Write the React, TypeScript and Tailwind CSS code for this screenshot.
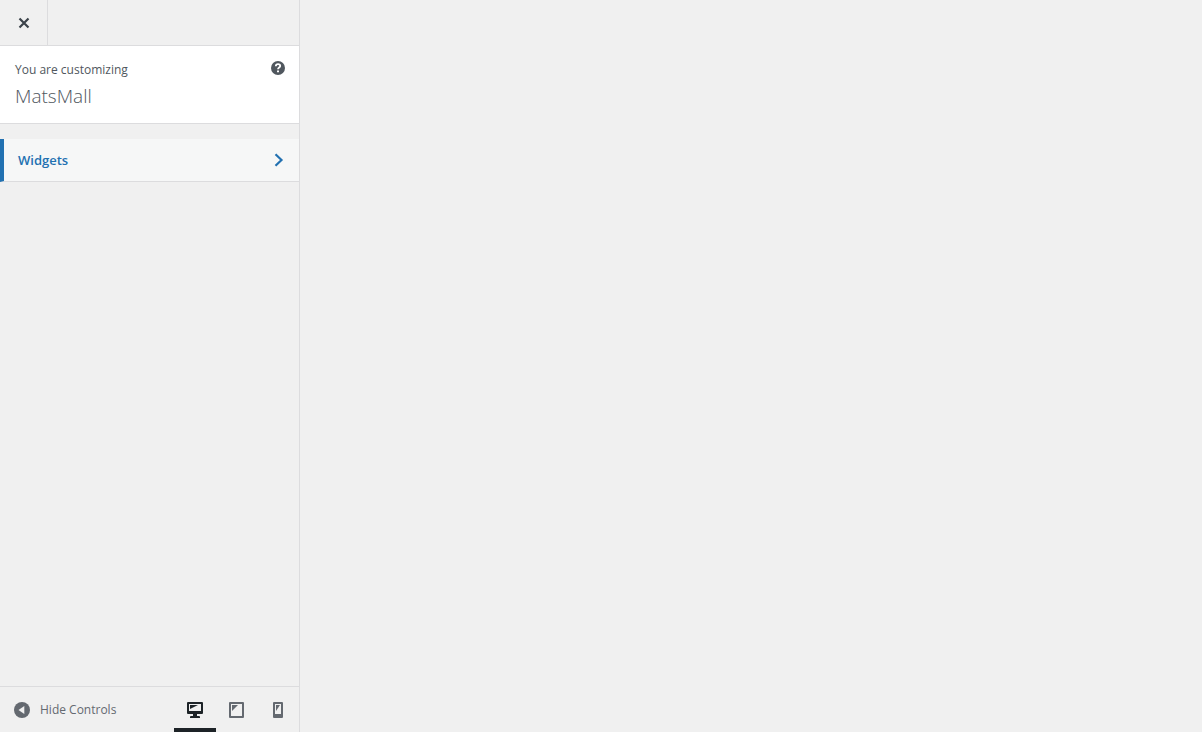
import { useState } from "react";
import clsx from "clsx";

const devices = [
  {
    id: "desktop",
    label: "Enter desktop preview mode",
    icon: (
      <>
        <path fillRule="evenodd" d="M1 0h14q1 0 1 1v10q0 1-1 1h-5v2h2q1 0 1 1v1H3v-1q0-1 1-1h2v-2H1q-1 0-1-1V1q0-1 1-1zM2 2v7h12V2z" />
        <path d="M3 3h8L3 7z" />
      </>
    ),
  },
  {
    id: "tablet",
    label: "Enter tablet preview mode",
    icon: (
      <>
        <path fillRule="evenodd" d="M1 0h13q1 0 1 1v14q0 1-1 1H1q-1 0-1-1V1q0-1 1-1zM2 2v12h11V2z" />
        <path d="M3 3h6L3 9z" />
      </>
    ),
  },
  {
    id: "mobile",
    label: "Enter mobile preview mode",
    icon: (
      <>
        <path fillRule="evenodd" d="M3 0h8q1 0 1 1v14q0 1-1 1H3q-1 0-1-1V1q0-1 1-1zM4 2v10h6V2z" />
        <path d="M5 3h4L5 9z" />
      </>
    ),
  },
];

export default function App() {
  const [device, setDevice] = useState("desktop");

  return (
    <div className="flex min-h-screen bg-[#f0f0f0] font-['Open_Sans',sans-serif] text-xs leading-5 text-[#50575e]">
      <aside className="flex w-[300px] shrink-0 flex-col border-r border-[#dcdcde]">
        <header className="flex h-[46px] border-b border-[#dcdcde]">
          <button type="button" aria-label="Close the Customizer" className="flex w-12 items-center justify-center border-r border-[#dcdcde] text-[#3c434a]">
            <svg className="size-3" viewBox="0 0 12 12" fill="none" stroke="currentColor" strokeWidth="2.2">
              <path d="M1.500 1.500l9 9M10.500 1.500l-9 9" />
            </svg>
          </button>
        </header>

        <section className="flex h-[78px] items-start justify-between border-b border-[#dcdcde] bg-white px-[14px] pt-[14px]">
          <div className="pl-px">
            <p>You are customizing</p>
            <h1 className="mt-1 text-[19px] leading-6 font-light">MatsMall</h1>
          </div>
          <button type="button" aria-label="Help" className="mt-px">
            <svg className="size-[14px]" viewBox="0 0 14 14">
              <circle cx="7" cy="7" r="7" fill="#50575e" />
              <path d="M4.8 5.2C4.9 3.7 5.9 3.2 7 3.2c1.300 0 2.200.7 2.200 1.800 0 1.600-2.200 1.500-2.200 3.300" fill="none" stroke="#fff" strokeWidth="1.800" />
              <path d="M6 9.400h2v1.800H6z" fill="#fff" />
            </svg>
          </button>
        </section>

        <nav className="mt-[15px] flex-1">
          <button type="button" className="flex h-[43px] w-full items-center justify-between border-b border-l-4 border-b-[#dcdcde] border-l-[#2271b1] bg-[#f6f7f7] pr-[15px] pl-[14px] text-[13px] font-semibold text-[#2271b1]">
            Widgets
            <svg className="h-[14px] w-[10px]" viewBox="0 0 10 14" fill="none" stroke="currentColor" strokeWidth="2.200">
              <path d="M1.500 1.200L7.500 7l-6 5.800" />
            </svg>
          </button>
        </nav>

        <footer className="flex h-[46px] justify-between border-t border-[#dcdcde] text-[#646970]">
          <button type="button" className="flex items-center gap-[10px] pl-[14px]">
            <svg className="size-4" viewBox="0 0 16 16">
              <circle cx="8" cy="8" r="8" fill="currentColor" />
              <path d="M10.300 4v8L4.500 8z" fill="#f0f0f0" />
            </svg>
            Hide Controls
          </button>
          <div className="-mr-px flex">
            {devices.map((d) => (
              <button
                key={d.id}
                type="button"
                aria-label={d.label}
                aria-pressed={device === d.id}
                onClick={() => setDevice(d.id)}
                className={clsx(
                  "flex w-[42px] items-center justify-center border-b-4 pt-1",
                  device === d.id ? "border-[#1d2327] text-[#1d2327]" : "border-transparent"
                )}
              >
                <svg className="size-4" viewBox="0 0 16 16" fill="currentColor">
                  {d.icon}
                </svg>
              </button>
            ))}
          </div>
        </footer>
      </aside>
      <main className="flex-1" />
    </div>
  );
}
